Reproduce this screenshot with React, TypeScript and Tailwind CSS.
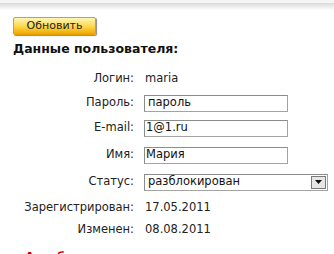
import React from "react";

const rows = [
  { label: "Логин:", h: "h-[24px]", kind: "text", value: "maria" },
  { label: "Пароль:", h: "h-[24px]", kind: "input", value: "пароль", pad: "pl-[3px]" },
  { label: "E-mail:", h: "h-[26px]", kind: "input", value: "1@1.ru", pad: "pl-[1px]" },
  { label: "Имя:", h: "h-[28px]", kind: "input", value: "Мария", pad: "pl-[1px]" },
  { label: "Статус:", h: "h-[26px]", kind: "select", value: "разблокирован" },
  { label: "Зарегистрирован:", h: "h-[25px]", kind: "text", value: "17.05.2011" },
  { label: "Изменен:", h: "h-[19px]", kind: "text", value: "08.08.2011" },
];

function Value({ kind, value, pad }: { kind: string; value: string; pad?: string }) {
  if (kind === "input") {
    return (
      <div
        className={`w-[144px] h-[17px] border border-[#a3a3a3] border-t-[#8c8c8c] border-l-[#8c8c8c] bg-white flex items-center text-[#111] ${pad}`}
      >
        {value}
      </div>
    );
  }
  if (kind === "select") {
    return (
      <div className="w-[184px] h-[17px] border border-[#a3a3a3] border-t-[#8c8c8c] border-l-[#8c8c8c] bg-white flex items-center justify-between pl-[3px] pr-[1px] text-[#111]">
        <span>{value}</span>
        <div className="w-[15px] h-[13px] border border-[#7a7a7a] bg-[#e6e6e6] flex items-center justify-center">
          <svg width="7" height="4" viewBox="0 0 7 4">
            <path d="M0 0h7L3.5 4z" fill="#111" />
          </svg>
        </div>
      </div>
    );
  }
  return <span className="pl-[1px] text-[#222]">{value}</span>;
}

export default function App() {
  return (
    <div className="w-[334px] h-[254px] overflow-hidden bg-white font-['DejaVu_Sans',sans-serif] text-[11.5px]">
      <div className="h-[10px] bg-[linear-gradient(#f4f4f4_0,#f4f4f4_3px,#d8d8d8_3px,#ffffff_10px)]" />

      <div className="ml-[13px] mt-[7px] w-[83px] h-[18px] rounded-[2px] border border-[#e0a000] bg-[linear-gradient(#fff6b8,#fcd646_55%,#f2a600)] shadow-[1px_1px_1px_#8a8a8a] flex items-center justify-center text-[11px] text-[#222]">
        Обновить
      </div>

      <h2 className="ml-[13px] mt-[6px] text-[12.5px] leading-[15px] font-bold text-[#111]">
        Данные пользователя:
      </h2>

      <div className="mt-[11px] flex flex-col">
        {rows.map((r) => (
          <div key={r.label} className={`flex items-center ${r.h}`}>
            <span className="w-[134px] text-right text-[#222]">{r.label}</span>
            <div className="ml-[10px]">
              <Value kind={r.kind} value={r.value} pad={r.pad} />
            </div>
          </div>
        ))}
      </div>

      <div className="ml-[25px] mt-[11px] text-[12px] leading-[15px] font-bold text-[#cc0000]">
        Автоблокировка отключена
      </div>
    </div>
  );
}
